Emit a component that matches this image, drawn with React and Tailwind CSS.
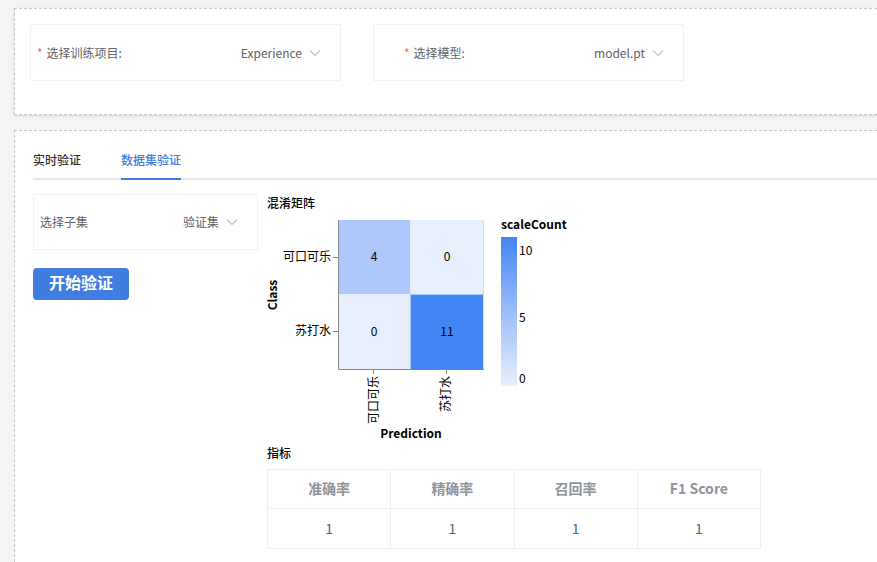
import { useState } from "react";

const METRICS = [
  { name: "准确率", value: 1 },
  { name: "精确率", value: 1 },
  { name: "召回率", value: 1 },
  { name: "F1 Score", value: 1 },
];

const CELLS = [
  { x: 72, y: 8, width: 71, value: 4, fill: "#aec8fb", cx: 107, cy: 49 },
  { x: 143, y: 8, width: 73, value: 0, fill: "#e7effd", cx: 180, cy: 49 },
  { x: 72, y: 82, width: 71, value: 0, fill: "#e7effd", cx: 107, cy: 124 },
  { x: 143, y: 82, width: 73, value: 11, fill: "#4285f4", cx: 180, cy: 124 },
];

function Chevron() {
  return (
    <svg className="pointer-events-none shrink-0" width="12" height="8" viewBox="0 0 12 8" fill="none" stroke="#c0c4cc" strokeWidth="1.1" aria-hidden="true">
      <path d="M1 1.5 6 6.5 11 1.5" />
    </svg>
  );
}

function SelectBox({ id, label, required, options, className }) {
  return (
    <div className={`flex items-center border border-[#f0f1f3] text-xs text-[#606266] ${className}`}>
      <label htmlFor={id} className="shrink-0">
        {required && <span className="mr-1 text-[#ee6b6b]">*</span>}
        {label}
      </label>
      <select
        id={id}
        className="h-8 min-w-0 flex-1 appearance-none bg-transparent pr-[7px] outline-none [text-align-last:right]"
      >
        {options.map((option) => (
          <option key={option}>{option}</option>
        ))}
      </select>
      <Chevron />
    </div>
  );
}

function ConfusionMatrix() {
  return (
    <svg className="block overflow-visible" width="310" height="232" viewBox="0 0 310 232" fontSize="12" fill="#000" role="img" aria-label="混淆矩阵">
      <defs>
        <linearGradient id="scale" x1="0" y1="0" x2="0" y2="1">
          <stop offset="0" stopColor="#4285f4" />
          <stop offset="0.5" stopColor="#9bbcfa" />
          <stop offset="1" stopColor="#e7effd" />
        </linearGradient>
      </defs>
      {CELLS.map((c) => (
        <g key={`${c.x}-${c.y}`}>
          <rect x={c.x} y={c.y} width={c.width} height="75" fill={c.fill} />
          <text x={c.cx} y={c.cy} textAnchor="middle">{c.value}</text>
        </g>
      ))}
      <path d="M143.5 83V157M143 82.5H216" fill="none" stroke="#a9c8fa" />
      <path d="M216.5 8V157" fill="none" stroke="#dddddd" />
      <path d="M71.5 8V157.5H217M66 45.5H71M66 119.5H71M106.5 158V162M179.5 158V162" fill="none" stroke="#888888" />
      <text x="64" y="49" textAnchor="end">可口可乐</text>
      <text x="64" y="123" textAnchor="end">苏打水</text>
      <text transform="translate(111 164) rotate(-90)" textAnchor="end">可口可乐</text>
      <text transform="translate(183 164) rotate(-90)" textAnchor="end">苏打水</text>
      <text transform="translate(10 83) rotate(-90)" textAnchor="middle" fontWeight="700">Class</text>
      <text x="144" y="226" textAnchor="middle" fontWeight="700">Prediction</text>
      <text x="234" y="17" fontWeight="700">scaleCount</text>
      <rect x="234" y="25" width="16" height="149" fill="url(#scale)" />
      <text x="252" y="43">10</text>
      <text x="252" y="110">5</text>
      <text x="252" y="171">0</text>
    </svg>
  );
}

export default function App() {
  const [tab, setTab] = useState("dataset");
  const tabs = [
    { id: "live", label: "实时验证" },
    { id: "dataset", label: "数据集验证" },
  ];

  return (
    <div className="flex min-h-screen flex-col gap-[15px] overflow-hidden bg-[#f4f4f5] pt-2 pl-[14px] font-['Noto_Sans_CJK_SC',sans-serif] text-xs text-black">
      <section className="flex items-start gap-8 border border-r-0 border-dashed border-[#c6c7ca] bg-white px-[15px] pt-[15px] pb-[33px] shadow-sm">
        <SelectBox id="project" label="选择训练项目:" required options={["Experience"]} className="h-[57px] w-[311px] pr-[19px] pl-[6px]" />
        <SelectBox id="model" label="选择模型:" required options={["model.pt"]} className="h-[57px] w-[311px] pr-[19px] pl-[30px]" />
      </section>

      <section className="flex-1 border border-r-0 border-b-0 border-dashed border-[#c6c7ca] bg-white pt-[10px] pl-[18px]">
        <div role="tablist" className="flex h-[39px] gap-10 shadow-[inset_0_-2px_0_#e4e7ed]">
          {tabs.map((t) => (
            <button
              key={t.id}
              role="tab"
              type="button"
              aria-selected={tab === t.id}
              onClick={() => setTab(t.id)}
              className={`border-b-2 pt-px font-medium ${tab === t.id ? "border-[#3f7de0] text-[#3f7de0]" : "border-transparent text-[#303133]"}`}
            >
              {t.label}
            </button>
          ))}
        </div>

        <div className="flex items-start gap-[9px] pt-[14px]">
          <div className="w-[225px] shrink-0">
            <SelectBox id="subset" label="选择子集" options={["验证集"]} className="h-14 pr-[19px] pl-[6px]" />
            <button type="button" className="mt-[18px] h-8 rounded bg-[#3f7de0] px-4 pb-1 text-base leading-4 font-bold text-white">
              开始验证
            </button>
          </div>

          <div className="min-w-0">
            <h2 className="leading-[18px] font-medium">混淆矩阵</h2>
            <ConfusionMatrix />
            <h2 className="leading-[18px] font-medium">指标</h2>
            <table className="mt-[7px] w-[494px] table-fixed border-collapse text-center text-sm text-[#606266]">
              <thead>
                <tr className="h-[39px] text-[#909399]">
                  {METRICS.map((m) => (
                    <th key={m.name} scope="col" className="border border-[#ebeef5] pb-[2px] font-bold">{m.name}</th>
                  ))}
                </tr>
              </thead>
              <tbody>
                <tr className="h-10">
                  {METRICS.map((m) => (
                    <td key={m.name} className="border border-[#ebeef5] pb-[2px]">{m.value}</td>
                  ))}
                </tr>
              </tbody>
            </table>
          </div>
        </div>
      </section>
    </div>
  );
}
